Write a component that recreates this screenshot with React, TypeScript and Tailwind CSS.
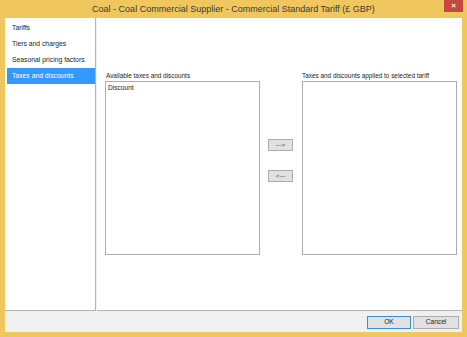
import React from 'react';

const sections = ['Tariffs', 'Tiers and charges', 'Seasonal pricing factors', 'Taxes and discounts'];

const App: React.FC = () => {
  const selected = 3;

  return (
    <div className="w-[467px] h-[337px] bg-[#f0c75e] flex flex-col font-['Liberation_Sans',Arial,sans-serif] text-[#1e1e1e] overflow-hidden">
      {/* Title bar */}
      <div className="relative h-[18px] flex items-center justify-center">
        <span className="text-[9px] text-[#3a3a3a] leading-none pt-[1px]">
          Coal - Coal Commercial Supplier - Commercial Standard Tariff (£ GBP)
        </span>
        <div className="absolute right-[4px] top-0 w-[19px] h-[12px] bg-[#c7473d] flex items-center justify-center text-white text-[8px] leading-none font-bold">
          ×
        </div>
      </div>

      {/* Dialog body */}
      <div className="flex-1 mx-[5px] bg-[#f0f0f0] flex flex-col">
        <div className="flex h-[293px]">
          {/* Section list */}
          <div className="w-[91px] bg-white border-r border-b border-[#b4b4b4] pt-[2px] pl-[2px]">
            {sections.map((s, i) => (
              <div
                key={s}
                className={
                  i === selected
                    ? 'h-[16px] flex items-center pl-[5px] text-[6.8px] bg-[#3399ff] text-white'
                    : 'h-[16px] flex items-center pl-[5px] text-[6.8px]'
                }
              >
                {s}
              </div>
            ))}
          </div>

          {/* Content */}
          <div className="flex-1 ml-[1px] bg-white border-b border-[#b4b4b4] flex pt-[53px] pl-[8px]">
            <div className="w-[155px] flex flex-col">
              <div className="h-[10px] pl-[1px] text-[6.4px] leading-[10px]">Available taxes and discounts</div>
              <div className="h-[174px] border border-[#acacac] px-[2px] pt-[1px] text-[6.6px] leading-[9px]">Discount</div>
            </div>

            <div className="w-[25px] mx-[8px] pt-[68px] flex flex-col gap-[19px]">
              <div className="h-[12px] bg-[#e1e1e1] border border-[#adadad] flex items-center justify-center text-[6px] leading-none text-[#333]">
                ---&gt;
              </div>
              <div className="h-[12px] bg-[#e1e1e1] border border-[#adadad] flex items-center justify-center text-[6px] leading-none text-[#333]">
                &lt;---
              </div>
            </div>

            <div className="w-[155px] ml-[1px] flex flex-col">
              <div className="h-[10px] text-[6.4px] leading-[10px]">Taxes and discounts applied to selected tariff</div>
              <div className="h-[174px] border border-[#acacac]" />
            </div>
          </div>
        </div>

        {/* Footer */}
        <div className="flex justify-end gap-[2px] pt-[5px] pr-[3px]">
          <div className="w-[44px] h-[13px] bg-[#e1e1e1] border border-[#3c8dd0] flex items-center justify-center text-[6.6px] leading-none">
            OK
          </div>
          <div className="w-[46px] h-[13px] bg-[#e1e1e1] border border-[#adadad] flex items-center justify-center text-[6.6px] leading-none">
            Cancel
          </div>
        </div>
      </div>

      <div className="h-[5px]" />
    </div>
  );
};

export default App;
